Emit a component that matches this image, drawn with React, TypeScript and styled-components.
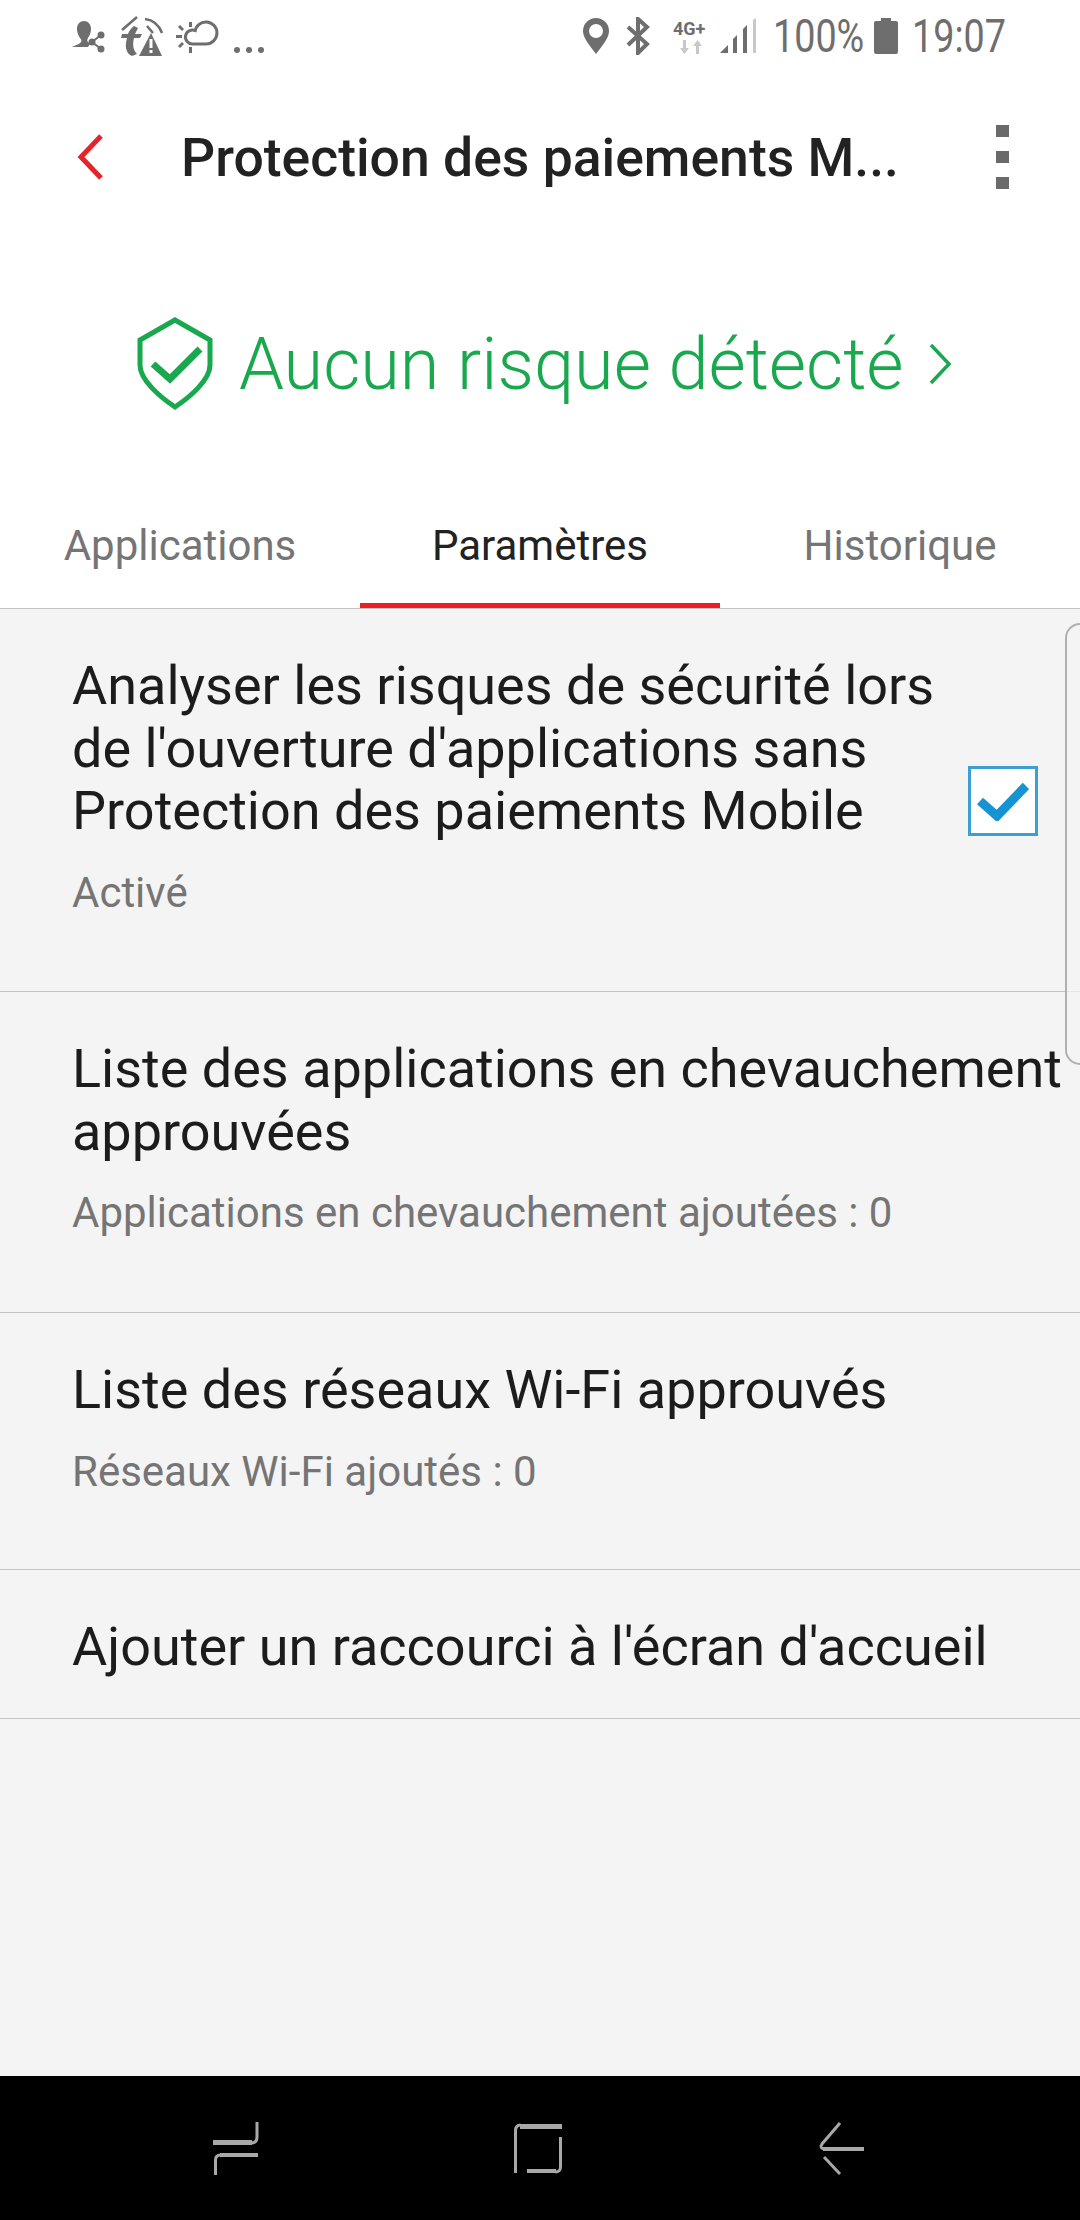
import React from 'react';
import styled, { createGlobalStyle } from 'styled-components';

const GlobalStyle = createGlobalStyle`
    html, body {
        margin: 0;
        padding: 0;
        background: #f4f4f4;
    }
    * {
        box-sizing: border-box;
    }
`;

const Screen = styled.div`
    position: relative;
    width: 1080px;
    height: 2220px;
    display: flex;
    flex-direction: column;
    overflow: hidden;
    background: #f4f4f4;
    font-family: Roboto, "Liberation Sans", sans-serif;
`;

const Header = styled.div`
    background: #fff;
    height: 609px;
    flex: none;
    display: flex;
    flex-direction: column;
    border-bottom: 1px solid #c4c4c4;
`;

const StatusBar = styled.div`
    height: 100px;
    padding: 10px 74px 0 71px;
    display: flex;
    align-items: flex-start;
    justify-content: space-between;
    color: #6e6e6e;
`;

const LeftIcons = styled.svg`
    margin-top: 2px;
`;

const StatusGroup = styled.div`
    display: flex;
    align-items: center;
    height: 52px;
`;

const StatusText = styled.span<{ $left: number; $width: number }>`
    display: inline-block;
    width: ${({ $width }) => $width}px;
    margin-left: ${({ $left }) => $left}px;
    font-size: 46px;
    line-height: 52px;
    white-space: nowrap;
    transform: scaleX(0.82);
    transform-origin: left center;
`;

const NetworkType = styled.div`
    width: 36px;
    height: 34px;
    margin: 4px 0 0 23px;
`;

const NetworkLabel = styled.span`
    display: block;
    font-size: 18px;
    font-weight: 700;
    line-height: 16px;
    color: #6e6e6e;
    white-space: nowrap;
`;

const Toolbar = styled.div`
    height: 114px;
    flex: none;
    display: flex;
    align-items: center;
    padding-left: 76px;
`;

const Title = styled.div`
    width: 717px;
    margin-left: 77px;
    font-size: 53.5px;
    font-weight: 500;
    color: #222;
    white-space: nowrap;
    overflow: hidden;
`;

const MoreDots = styled.div`
    margin-left: 98px;
    display: flex;
    flex-direction: column;
    gap: 14px;
`;

const Dot = styled.span`
    width: 13px;
    height: 12px;
    background: #6a6a6a;
`;

const Banner = styled.div`
    height: 300px;
    flex: none;
    display: flex;
    align-items: center;
    padding-left: 137px;
    color: #1aa84f;
`;

const BannerText = styled.span`
    font-size: 72px;
    font-weight: 300;
    margin-left: 26px;
    white-space: nowrap;
`;

const Tabs = styled.div`
    flex: 1;
    display: grid;
    grid-template-columns: 360px 360px 360px;
`;

const Tab = styled.div<{ $active?: boolean }>`
    display: flex;
    align-items: center;
    justify-content: center;
    font-size: 42px;
    padding-bottom: 26px;
    color: ${({ $active }) => ($active ? '#222' : '#757575')};
    border-bottom: 5px solid ${({ $active }) => ($active ? '#ee1c25' : 'transparent')};
`;

const Row = styled.div<{ $height: number }>`
    height: ${({ $height }) => $height}px;
    flex: none;
    padding: 46px 0 0 72px;
    border-bottom: 1px solid #c4c4c4;
    display: flex;
    align-items: flex-start;
`;

const RowBody = styled.div`
    flex: 1;
    min-width: 0;
`;

const RowTitle = styled.div`
    font-size: 54px;
    line-height: 62.5px;
    color: #1c1c1c;
    white-space: pre;
`;

const RowSubtitle = styled.div`
    font-size: 42px;
    line-height: 50px;
    margin-top: 25px;
    color: #757575;
`;

const CheckBox = styled.div`
    width: 70px;
    height: 70px;
    flex: none;
    margin: 111px 42px 0 0;
    background: #fff;
    border: 3px solid #3b9fd4;
    display: flex;
    align-items: center;
    justify-content: center;
`;

const EdgeHandle = styled.div`
    position: absolute;
    top: 623px;
    left: 1065px;
    width: 30px;
    height: 442px;
    background: rgba(244, 244, 244, 0.7);
    border: 2px solid #b0b0b0;
    border-radius: 18px;
`;

const NavBar = styled.div`
    position: absolute;
    left: 0;
    right: 0;
    bottom: 0;
    height: 144px;
    background: #000;
    display: grid;
    grid-template-columns: 212px 48px 254px 48px 256px 48px 214px;
    align-items: center;
`;

const NavSlot = styled.div<{ $col: number }>`
    grid-column: ${({ $col }) => $col};
    display: flex;
    justify-content: center;
`;

const rows = [
    {
        height: 383,
        title: "Analyser les risques de sécurité lors\nde l'ouverture d'applications sans\nProtection des paiements Mobile",
        subtitle: 'Activé',
        checked: true,
    },
    {
        height: 321,
        title: 'Liste des applications en chevauchement\napprouvées',
        subtitle: 'Applications en chevauchement ajoutées : 0',
    },
    {
        height: 257,
        title: 'Liste des réseaux Wi-Fi approuvés',
        subtitle: 'Réseaux Wi-Fi ajoutés : 0',
    },
    {
        height: 149,
        title: "Ajouter un raccourci à l'écran d'accueil",
    },
];

const LeftStatusIcons = () => (
    <LeftIcons width="196" height="46" viewBox="0 0 196 46" fill="#6e6e6e">
        <path d="M1 35c4-2 8-3 9-5 1-1 0-3-1-4-2-3-3-6-3-9 0-5 3-8 7-8s7 3 7 8c0 3-1 6-3 9-1 2-1 3 0 4l2 2-2 3z" />
        <circle cx="30" cy="23" r="3.500" />
        <circle cx="21" cy="30" r="3.500" />
        <circle cx="30" cy="37" r="3.500" />
        <path d="M30 23l-9 7 9 7" fill="none" stroke="#6e6e6e" strokeWidth="2" />
        <path d="M51 18L66 5M74 7c8 1 14 6 17 14M76 14l6 7" fill="none" stroke="#6e6e6e" strokeWidth="2.500" />
        <path d="M63 14c-3 2-5 5-6 8h-6l-1 4h6c-2 7-2 15 5 18l5-2c-3-3-5-8-3-16h6l2-4h-7l3-6z" />
        <path d="M80 21l11 23H68z" />
        <path d="M80 27v9M80 38v3" stroke="#fff" strokeWidth="3" />
        <g fill="none" stroke="#6e6e6e" strokeWidth="3">
            <path d="M125 19a7 7 0 1 0-3 13h13a11 11 0 1 0-11-12" />
        </g>
        <path d="M118 10h3v5h-3zM118 35h3v6h-3zM105 23h6v3h-6zM109 13l4 4-2 2-4-4zM111 30l2 2-4 4-2-2z" />
        <circle cx="166" cy="38" r="3" />
        <circle cx="178" cy="38" r="3" />
        <circle cx="190" cy="38" r="3" />
    </LeftIcons>
);

const App = () => (
    <Screen>
        <GlobalStyle />
        <Header>
            <StatusBar>
                <LeftStatusIcons />
                <StatusGroup>
                    <svg width="26" height="36" viewBox="0 0 26 36">
                        <path fillRule="evenodd" fill="#6e6e6e" d="M13 0a13 13 0 0 1 13 13c0 7-7 15-13 23C7 28 0 20 0 13A13 13 0 0 1 13 0zm0 6a7 7 0 1 0 0 14 7 7 0 0 0 0-14z" />
                    </svg>
                    <svg width="24" height="38" viewBox="0 0 24 38" style={{ marginLeft: 17 }}>
                        <path fill="none" stroke="#6e6e6e" strokeWidth="4" d="M2 10l19 17-9 9V2l9 8L2 28" />
                    </svg>
                    <NetworkType>
                        <NetworkLabel>4G+</NetworkLabel>
                        <svg width="24" height="14" viewBox="0 0 24 14" style={{ marginLeft: 7, display: 'block', marginTop: 3 }}>
                            <path fill="#c8c8c8" d="M3 0h3v8h3l-4.500 6L0 8h3zM16 14h3V6h3l-4.500-6L13 6h3z" />
                        </svg>
                    </NetworkType>
                    <svg width="36" height="36" viewBox="0 0 36 36" style={{ marginLeft: 11 }}>
                        <path fill="#6e6e6e" d="M0 35l8-8v8zM13 21l4-4v18h-4zM23 11l4-4v28h-4z" />
                        <path fill="#c8c8c8" d="M33 2l3-2v35h-3z" />
                    </svg>
                    <StatusText $left={17} $width={90}>100%</StatusText>
                    <svg width="24" height="36" viewBox="0 0 24 36" style={{ marginLeft: 11 }}>
                        <path fill="#6e6e6e" d="M7 0h10v3h5a2 2 0 0 1 2 2v29a2 2 0 0 1-2 2H2a2 2 0 0 1-2-2V5a2 2 0 0 1 2-2h5z" />
                    </svg>
                    <StatusText $left={14} $width={94}>19:07</StatusText>
                </StatusGroup>
            </StatusBar>
            <Toolbar>
                <svg width="28" height="46" viewBox="0 0 28 46">
                    <path fill="none" stroke="#e3242b" strokeWidth="5" d="M25 2L5 23l20 21" />
                </svg>
                <Title>Protection des paiements M...</Title>
                <MoreDots>
                    <Dot />
                    <Dot />
                    <Dot />
                </MoreDots>
            </Toolbar>
            <Banner>
                <svg width="76" height="94" viewBox="0 0 76 94">
                    <path fill="none" stroke="#1aa84f" strokeWidth="5" d="M38 3l35 20v25c0 15-20 32-35 42C23 80 3 63 3 48V23z" />
                    <path fill="none" stroke="#1aa84f" strokeWidth="7" d="M16 47l17 15 30-30" />
                </svg>
                <BannerText>Aucun risque détecté</BannerText>
                <svg width="24" height="42" viewBox="0 0 24 42" style={{ marginLeft: 24 }}>
                    <path fill="none" stroke="#1aa84f" strokeWidth="3.500" d="M3 2l18 19L3 40" />
                </svg>
            </Banner>
            <Tabs>
                <Tab>Applications</Tab>
                <Tab $active>Paramètres</Tab>
                <Tab>Historique</Tab>
            </Tabs>
        </Header>
        {rows.map((row) => (
            <Row key={row.title} $height={row.height}>
                <RowBody>
                    <RowTitle>{row.title}</RowTitle>
                    {row.subtitle && <RowSubtitle>{row.subtitle}</RowSubtitle>}
                </RowBody>
                {row.checked && (
                    <CheckBox>
                        <svg width="52" height="40" viewBox="0 0 52 40">
                            <path fill="none" stroke="#1593d2" strokeWidth="9" d="M3 20l17 15L49 5" />
                        </svg>
                    </CheckBox>
                )}
            </Row>
        ))}
        <EdgeHandle />
        <NavBar>
            <NavSlot $col={2}>
                <svg width="48" height="56" viewBox="0 0 48 56">
                    <path fill="none" stroke="#a8a8a8" strokeWidth="3" d="M45 2v15c0 4-2 6-6 6" />
                    <path fill="none" stroke="#a8a8a8" strokeWidth="3" d="M3.500 55V40c0-4 2-5 5-5" />
                    <path fill="#a8a8a8" d="M1 20h39v5H1zM8 33h38v4H8z" />
                </svg>
            </NavSlot>
            <NavSlot $col={4}>
                <svg width="48" height="56" viewBox="0 0 48 56">
                    <path fill="none" stroke="#a8a8a8" strokeWidth="3" d="M1.500 53V11c0-4 2-6 5-6" />
                    <path fill="none" stroke="#a8a8a8" strokeWidth="3" d="M46.500 17v30c0 3-2 5-5 5" />
                    <path fill="#a8a8a8" d="M6 4h42v5H6zM13 49h29v4H13z" />
                </svg>
            </NavSlot>
            <NavSlot $col={6}>
                <svg width="48" height="56" viewBox="0 0 48 56">
                    <path fill="none" stroke="#a8a8a8" strokeWidth="3" d="M22 3L4 24c-2 3-1 5 3 5" />
                    <path fill="none" stroke="#a8a8a8" strokeWidth="3" d="M6 37l16 17" />
                    <path fill="#a8a8a8" d="M5 27h41v4H5z" />
                </svg>
            </NavSlot>
        </NavBar>
    </Screen>
);

export default App;
